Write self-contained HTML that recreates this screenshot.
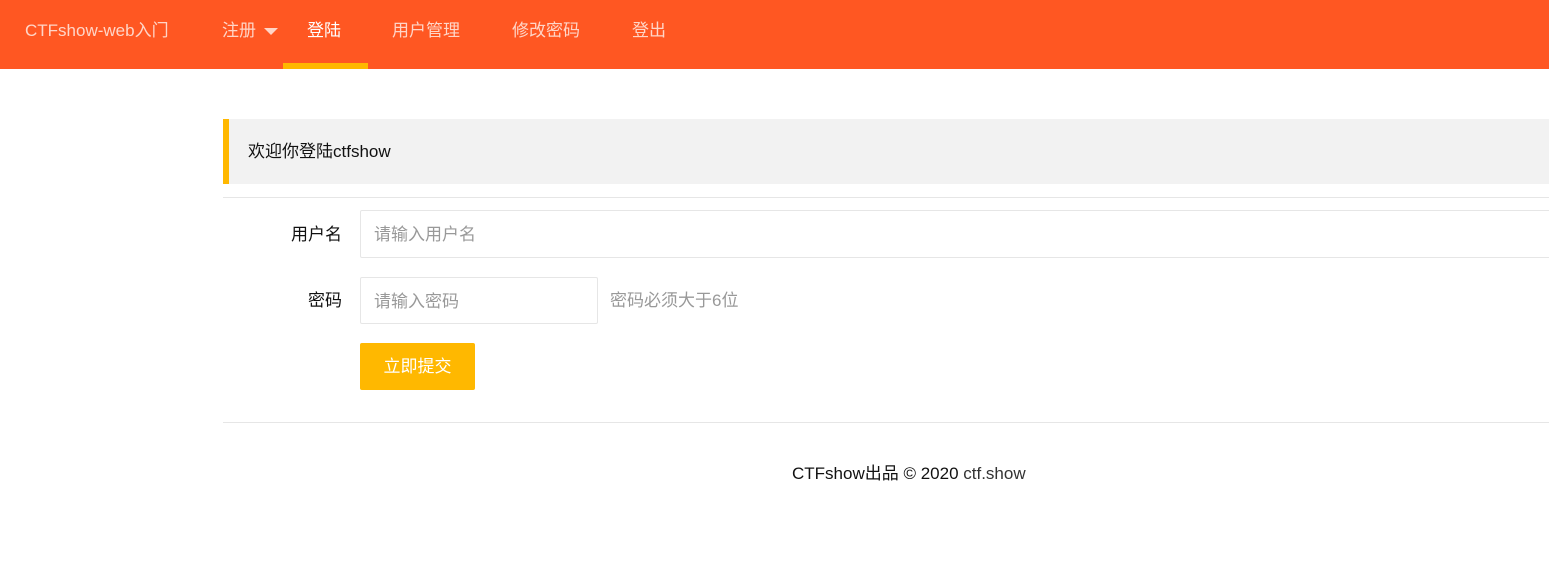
<!DOCTYPE html>
<html><head><meta charset="utf-8"><style>
*{margin:0;padding:0;box-sizing:border-box}
body{width:1549px;height:581px;overflow:hidden;background:#fff;font-family:"Liberation Sans","Noto Sans CJK SC",sans-serif;font-size:14px;color:#333;position:relative}
.nav{position:absolute;left:0;top:0;width:1549px;height:69px;background:#ff5722}
.nav span{position:absolute;top:20px;font-size:17px;color:rgba(255,255,255,.75);line-height:22px}
.tri{position:absolute;left:264px;top:28px;width:0;height:0;border-left:7px solid transparent;border-right:7px solid transparent;border-top:7px solid rgba(255,255,255,.75)}
.bar{position:absolute;left:283px;top:63px;width:85px;height:6px;background:#ffb800}
.quote{position:absolute;left:223px;top:119px;width:1326px;height:65px;background:#f2f2f2;border-left:6px solid #ffb800;padding-left:19px;line-height:65px;font-size:17px;color:#111}
.hr{position:absolute;left:223px;width:1326px;height:1px;background:#e6e6e6}
.lbl{position:absolute;font-size:17px;color:#111;text-align:right;width:120px;left:222px}
.inp{position:absolute;border:1px solid #e6e6e6;border-radius:2px;background:#fff;font-size:17px;color:#999;padding-left:13px}
.btn{position:absolute;left:360px;top:343px;width:115px;height:47px;background:#ffb800;border-radius:2px;color:#fff;font-size:17px;text-align:center;line-height:47px}
</style></head><body>
<div class="nav">
<span style="left:25px">CTFshow-web入门</span>
<span style="left:222px">注册</span><div class="tri"></div>
<span style="left:307px;color:#fff">登陆</span>
<span style="left:392px">用户管理</span>
<span style="left:512px">修改密码</span>
<span style="left:632px">登出</span>
<div class="bar"></div>
</div>
<div class="quote">欢迎你登陆ctfshow</div>
<div class="hr" style="top:197px"></div>
<div class="lbl" style="top:220px">用户名</div>
<div class="inp" style="left:360px;top:210px;width:1200px;height:48px;line-height:48px">请输入用户名</div>
<div class="lbl" style="top:286px">密码</div>
<div class="inp" style="left:360px;top:277px;width:238px;height:47px;line-height:47px">请输入密码</div>
<div style="position:absolute;left:610px;top:286px;font-size:17px;color:#999">密码必须大于6位</div>
<div class="btn">立即提交</div>
<div class="hr" style="top:422px"></div>
<div style="position:absolute;left:792px;top:459px;font-size:17px;color:#111">CTFshow出品 © 2020 <span style="color:#333">ctf.show</span></div>
</body></html>
